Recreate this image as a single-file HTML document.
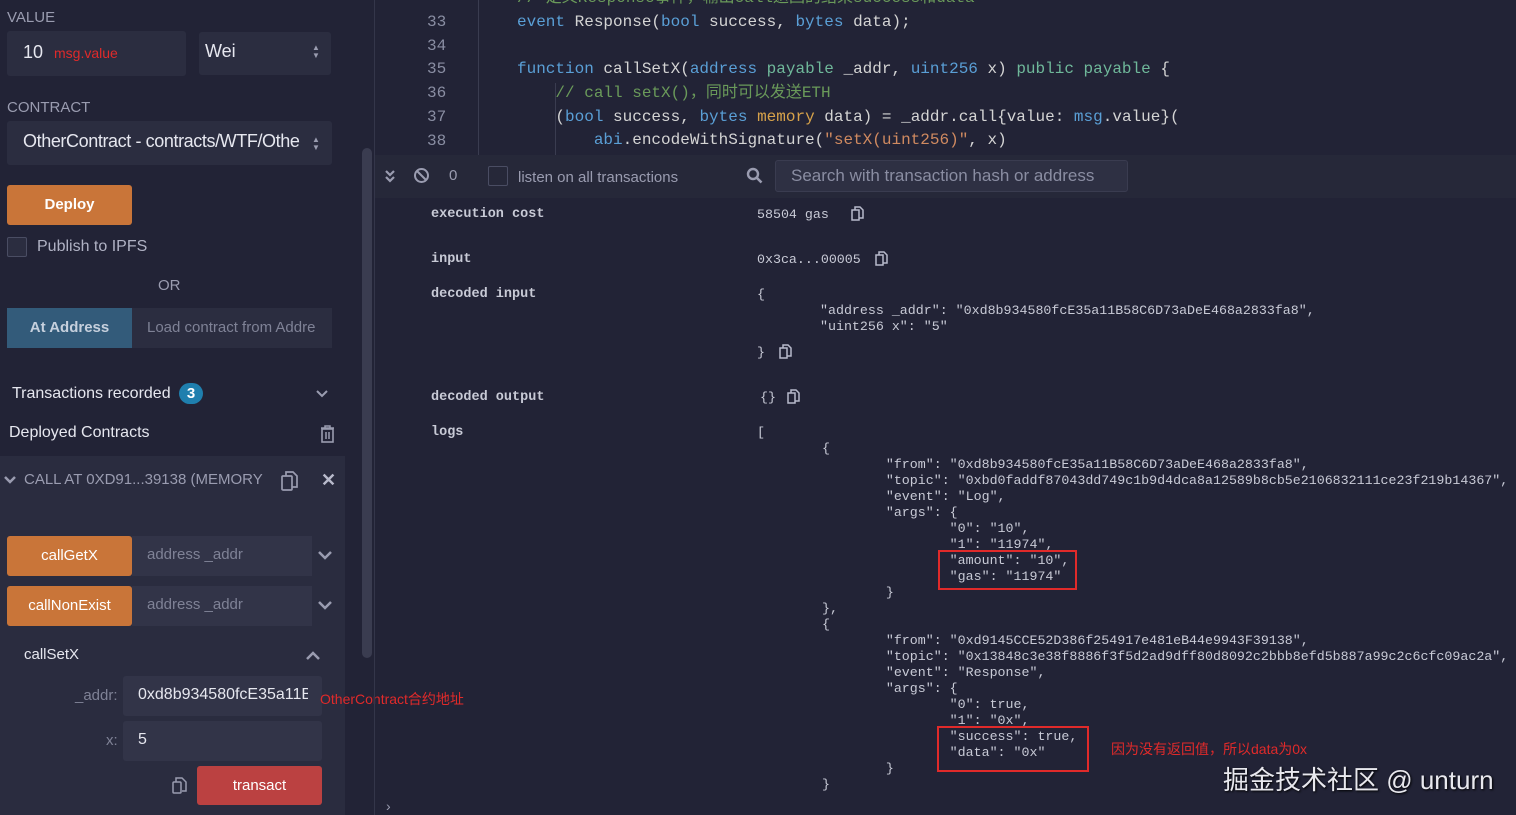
<!DOCTYPE html>
<html><head><meta charset="utf-8"><style>
*{margin:0;padding:0;box-sizing:border-box}
body{width:1516px;height:815px;overflow:hidden;background:#222336;font-family:"Liberation Sans","Noto Sans CJK SC",sans-serif;color:#c5c7d6;position:relative}
.a{position:absolute;white-space:pre}
.inp{position:absolute;background:#2b2d40;border-radius:3px}
.ob{position:absolute;background:#c97539;color:#fff;font-size:15px;text-align:center;border-radius:3px}
.code{font-family:"Liberation Mono","Noto Sans CJK SC",monospace;font-size:16px;color:#d4d4d4}
.ln{color:#8a8ea3;font-family:"Liberation Mono",monospace;font-size:16px}
.kb{color:#5a9fd6}.kg{color:#6fb89a}.ky{color:#d7a24a}.cm{color:#6a9a5a}.st{color:#d08a60}
.t{font-family:"Liberation Mono","Noto Sans CJK SC",monospace;font-size:13.3px;color:#c8cad6}
.lbl{font-family:"Liberation Mono",monospace;font-size:13.5px;color:#c8cad6;font-weight:bold}
.redbox{position:absolute;border:2px solid #e02a2a}
</style></head><body>
<div class="a" style="left:7px;top:9px;font-size:15px;color:#9a9cb0">VALUE</div>
<div class="inp" style="left:7px;top:31px;width:179px;height:45px"></div>
<div class="a" style="left:23px;top:42px;font-size:18px;color:#e6e7ef">10</div>
<div class="a" style="left:54px;top:45px;font-size:14px;color:#e02a2a">msg.value</div>
<div class="inp" style="left:199px;top:32px;width:132px;height:43px"></div>
<div class="a" style="left:205px;top:41px;font-size:18px;color:#e6e7ef">Wei</div>
<div class="a" style="left:312px;top:44px;font-size:8px;color:#9a9cb0;line-height:8px">▲<br>▼</div>
<div class="a" style="left:7px;top:99px;font-size:15px;color:#9a9cb0">CONTRACT</div>
<div class="inp" style="left:7px;top:121px;width:325px;height:44px"></div>
<div class="a" style="left:23px;top:131px;font-size:18px;color:#e6e7ef;letter-spacing:-0.4px">OtherContract - contracts/WTF/Othe</div>
<div class="a" style="left:312px;top:136px;font-size:8px;color:#9a9cb0;line-height:8px">▲<br>▼</div>
<div class="ob" style="left:7px;top:185px;width:125px;height:40px;line-height:40px;font-weight:bold">Deploy</div>
<div class="a" style="left:7px;top:237px;width:20px;height:20px;border:1px solid #4a4d63;border-radius:2px;background:#2b2d40"></div>
<div class="a" style="left:37px;top:238px;font-size:16px;color:#b0b2c4">Publish to IPFS</div>
<div class="a" style="left:158px;top:277px;font-size:15px;color:#9a9cb0">OR</div>
<div class="a" style="left:7px;top:308px;width:125px;height:40px;background:#335b7a;color:#c6d0dd;font-size:15px;font-weight:bold;text-align:center;line-height:40px">At Address</div>
<div class="inp" style="left:132px;top:308px;width:200px;height:40px;border-radius:0"></div>
<div class="a" style="left:147px;top:319px;font-size:15px;color:#7f8296">Load contract from Addre</div>
<div class="a" style="left:12px;top:385px;font-size:16px;color:#e6e7ef">Transactions recorded</div>
<div class="a" style="left:179px;top:383px;width:24px;height:21px;border-radius:11px;background:#1f7fae;color:#fff;font-size:15px;font-weight:bold;text-align:center;line-height:21px">3</div>
<svg class="a" style="left:316px;top:390px" width="12" height="8"><path d="M1 1l5 5 5-5" stroke="#9a9cb0" stroke-width="2" fill="none"/></svg>
<div class="a" style="left:9px;top:424px;font-size:16px;color:#e6e7ef">Deployed Contracts</div>
<svg class="a" style="left:320px;top:425px" width="15" height="18" viewBox="0 0 15 18"><rect x="2" y="4" width="11" height="13" fill="none" stroke="#9a9cb0" stroke-width="1.6"/><path d="M1 3h13M5 3V1h5v2M6 7v7M9 7v7" stroke="#9a9cb0" stroke-width="1.5" fill="none"/></svg>
<div class="a" style="left:0;top:456px;width:345px;height:359px;background:#2a2c3f"></div>
<svg class="a" style="left:4px;top:475px" width="12" height="10"><path d="M1 2l5 5 5-5" stroke="#9a9cb0" stroke-width="2.5" fill="none"/></svg>
<div class="a" style="left:24px;top:471px;font-size:15px;color:#9a9cb0">CALL AT 0XD91...39138 (MEMORY</div>
<svg class="a" style="left:280px;top:470px" width="19" height="22"><rect x="2" y="6" width="10" height="14" rx="1" fill="none" stroke="#9a9cb0" stroke-width="1.7"/><path d="M6 6V2h7l4 4v11h-5" stroke="#9a9cb0" stroke-width="1.7" fill="none"/></svg>
<div class="a" style="left:321px;top:470px;font-size:18px;color:#b8bacb;font-weight:bold">✕</div>
<div class="ob" style="left:7px;top:536px;width:125px;height:40px;line-height:40px">callGetX</div>
<div class="inp" style="left:132px;top:536px;width:180px;height:40px;border-radius:0;background:#323448"></div>
<div class="a" style="left:147px;top:546px;font-size:15px;color:#7f8296">address _addr</div>
<svg class="a" style="left:318px;top:550px" width="14" height="10"><path d="M1 2l6 6 6-6" stroke="#9a9cb0" stroke-width="2.5" fill="none"/></svg>
<div class="ob" style="left:7px;top:586px;width:125px;height:40px;line-height:40px">callNonExist</div>
<div class="inp" style="left:132px;top:586px;width:180px;height:40px;border-radius:0;background:#323448"></div>
<div class="a" style="left:147px;top:596px;font-size:15px;color:#7f8296">address _addr</div>
<svg class="a" style="left:318px;top:600px" width="14" height="10"><path d="M1 2l6 6 6-6" stroke="#9a9cb0" stroke-width="2.5" fill="none"/></svg>
<div class="a" style="left:24px;top:646px;font-size:15px;color:#e6e7ef">callSetX</div>
<svg class="a" style="left:306px;top:651px" width="14" height="10"><path d="M1 8l6-6 6 6" stroke="#9a9cb0" stroke-width="2.5" fill="none"/></svg>
<div class="a" style="left:75px;top:687px;font-size:15px;color:#7f8296">_addr:</div>
<div class="inp" style="left:123px;top:676px;width:199px;height:40px;background:#323448"></div>
<div class="a" style="left:138px;top:686px;font-size:16px;color:#e6e7ef;width:170px;overflow:hidden">0xd8b934580fcE35a11B</div>
<div class="a" style="left:320px;top:689px;font-size:14px;color:#e02a2a">OtherContract合约地址</div>
<div class="a" style="left:106px;top:732px;font-size:15px;color:#7f8296">x:</div>
<div class="inp" style="left:123px;top:721px;width:199px;height:40px;background:#323448"></div>
<div class="a" style="left:138px;top:731px;font-size:16px;color:#e6e7ef">5</div>
<svg class="a" style="left:172px;top:777px" width="16" height="18"><rect x="1" y="5" width="8" height="11" rx="1" fill="none" stroke="#9a9cb0" stroke-width="1.5"/><path d="M4 5V1h6l4 4v9h-4" stroke="#9a9cb0" stroke-width="1.5" fill="none"/></svg>
<div class="a" style="left:197px;top:766px;width:125px;height:39px;background:#bb4141;color:#fff;font-size:15px;text-align:center;line-height:39px;border-radius:3px">transact</div>
<div class="a" style="left:362px;top:148px;width:10px;height:510px;background:#3a3c50;border-radius:5px"></div>
<div class="a" style="left:374px;top:0;width:1px;height:815px;background:#34364a"></div>
<div class="a" style="left:478px;top:0;width:1px;height:155px;background:#3a3c50"></div>
<div class="a ln" style="left:427px;top:11px;line-height:23.7px">33
34
35
36
37
38</div>
<div class="a code" style="left:517px;top:-13px;line-height:23.7px"><span class="cm">// 定义Response事件，输出call返回的结果success和data</span>
<span class="kb">event</span> Response(<span class="kb">bool</span> success, <span class="kb">bytes</span> data);

<span class="kb">function</span> callSetX(<span class="kb">address</span> <span class="kg">payable</span> _addr, <span class="kb">uint256</span> x) <span class="kg">public payable</span> {
    <span class="cm">// call setX()，同时可以发送ETH</span>
    (<span class="kb">bool</span> success, <span class="kb">bytes</span> <span class="ky">memory</span> data) = _addr.call{value: <span class="kb">msg</span>.value}(
        <span class="kb">abi</span>.encodeWithSignature(<span class="st">"setX(uint256)"</span>, x)</div>
<div class="a" style="left:555px;top:83px;width:1px;height:72px;background:#3a3c50"></div>
<div class="a" style="left:375px;top:155px;width:1141px;height:43px;background:#262839"></div>
<svg class="a" style="left:384px;top:169px" width="12" height="14"><path d="M2 2l4 4 4-4M2 8l4 4 4-4" stroke="#9a9cb0" stroke-width="2.2" fill="none"/></svg>
<svg class="a" style="left:413px;top:167px" width="17" height="17"><circle cx="8.5" cy="8.5" r="6.5" fill="none" stroke="#9a9cb0" stroke-width="2"/><path d="M4 4l9 9" stroke="#9a9cb0" stroke-width="2"/></svg>
<div class="a" style="left:449px;top:167px;font-size:15px;color:#9a9cb0">0</div>
<div class="a" style="left:488px;top:166px;width:20px;height:20px;border:1px solid #4a4d63;border-radius:2px"></div>
<div class="a" style="left:518px;top:169px;font-size:15px;color:#9a9cb0">listen on all transactions</div>
<svg class="a" style="left:746px;top:167px" width="17" height="17"><circle cx="7" cy="7" r="5" fill="none" stroke="#9a9cb0" stroke-width="2.4"/><path d="M11 11l4.5 4.5" stroke="#9a9cb0" stroke-width="2.6"/></svg>
<div class="a" style="left:775px;top:160px;width:353px;height:32px;background:#2e3043;border:1px solid #3a3c50;border-radius:3px"></div>
<div class="a" style="left:791px;top:166px;font-size:17px;color:#8a8da2">Search with transaction hash or address</div>
<div class="a lbl" style="left:431px;top:207px">execution cost</div>
<div class="a t" style="left:757px;top:207px">58504 gas</div>
<div class="a lbl" style="left:431px;top:252px">input</div>
<div class="a t" style="left:757px;top:252px">0x3ca...00005</div>
<div class="a lbl" style="left:431px;top:287px">decoded input</div>
<div class="a t" style="left:757px;top:287px">{</div>
<div class="a t" style="left:820px;top:303px;line-height:16px">"address _addr": "0xd8b934580fcE35a11B58C6D73aDeE468a2833fa8",
"uint256 x": "5"</div>
<div class="a t" style="left:757px;top:345px">}</div>
<div class="a lbl" style="left:431px;top:390px">decoded output</div>
<div class="a t" style="left:760px;top:390px">{}</div>
<div class="a lbl" style="left:431px;top:425px">logs</div>
<div class="a t" style="left:757px;top:425px">[</div>
<div class="a t" style="left:822px;top:441px;line-height:16px">{
        "from": "0xd8b934580fcE35a11B58C6D73aDeE468a2833fa8",
        "topic": "0xbd0faddf87043dd749c1b9d4dca8a12589b8cb5e2106832111ce23f219b14367",
        "event": "Log",
        "args": {
                "0": "10",
                "1": "11974",
                "amount": "10",
                "gas": "11974"
        }
},
{
        "from": "0xd9145CCE52D386f254917e481eB44e9943F39138",
        "topic": "0x13848c3e38f8886f3f5d2ad9dff80d8092c2bbb8efd5b887a99c2c6cfc09ac2a",
        "event": "Response",
        "args": {
                "0": true,
                "1": "0x",
                "success": true,
                "data": "0x"
        }
}</div>
<svg class="a" style="left:851px;top:206px" width="14" height="16"><rect x="1" y="4" width="7" height="10" fill="none" stroke="#b8bacb" stroke-width="1.5"/><path d="M4 4V1h5l3 3v8h-4" stroke="#b8bacb" stroke-width="1.5" fill="none"/></svg>
<svg class="a" style="left:875px;top:251px" width="14" height="16"><rect x="1" y="4" width="7" height="10" fill="none" stroke="#b8bacb" stroke-width="1.5"/><path d="M4 4V1h5l3 3v8h-4" stroke="#b8bacb" stroke-width="1.5" fill="none"/></svg>
<svg class="a" style="left:779px;top:344px" width="14" height="16"><rect x="1" y="4" width="7" height="10" fill="none" stroke="#b8bacb" stroke-width="1.5"/><path d="M4 4V1h5l3 3v8h-4" stroke="#b8bacb" stroke-width="1.5" fill="none"/></svg>
<svg class="a" style="left:787px;top:389px" width="14" height="16"><rect x="1" y="4" width="7" height="10" fill="none" stroke="#b8bacb" stroke-width="1.5"/><path d="M4 4V1h5l3 3v8h-4" stroke="#b8bacb" stroke-width="1.5" fill="none"/></svg>
<div class="redbox" style="left:938px;top:550px;width:139px;height:40px"></div>
<div class="redbox" style="left:937px;top:726px;width:152px;height:46px"></div>
<div class="a" style="left:1111px;top:739px;font-size:14px;color:#e02a2a">因为没有返回值，所以data为0x</div>
<div class="a" style="left:1223px;top:760px;font-size:26px;color:#e8e8ee;text-shadow:1px 1px 2px #000">掘金技术社区 @ unturn</div>
<div class="a" style="left:386px;top:798px;font-size:14px;color:#9a9cb0">›</div>
</body></html>
